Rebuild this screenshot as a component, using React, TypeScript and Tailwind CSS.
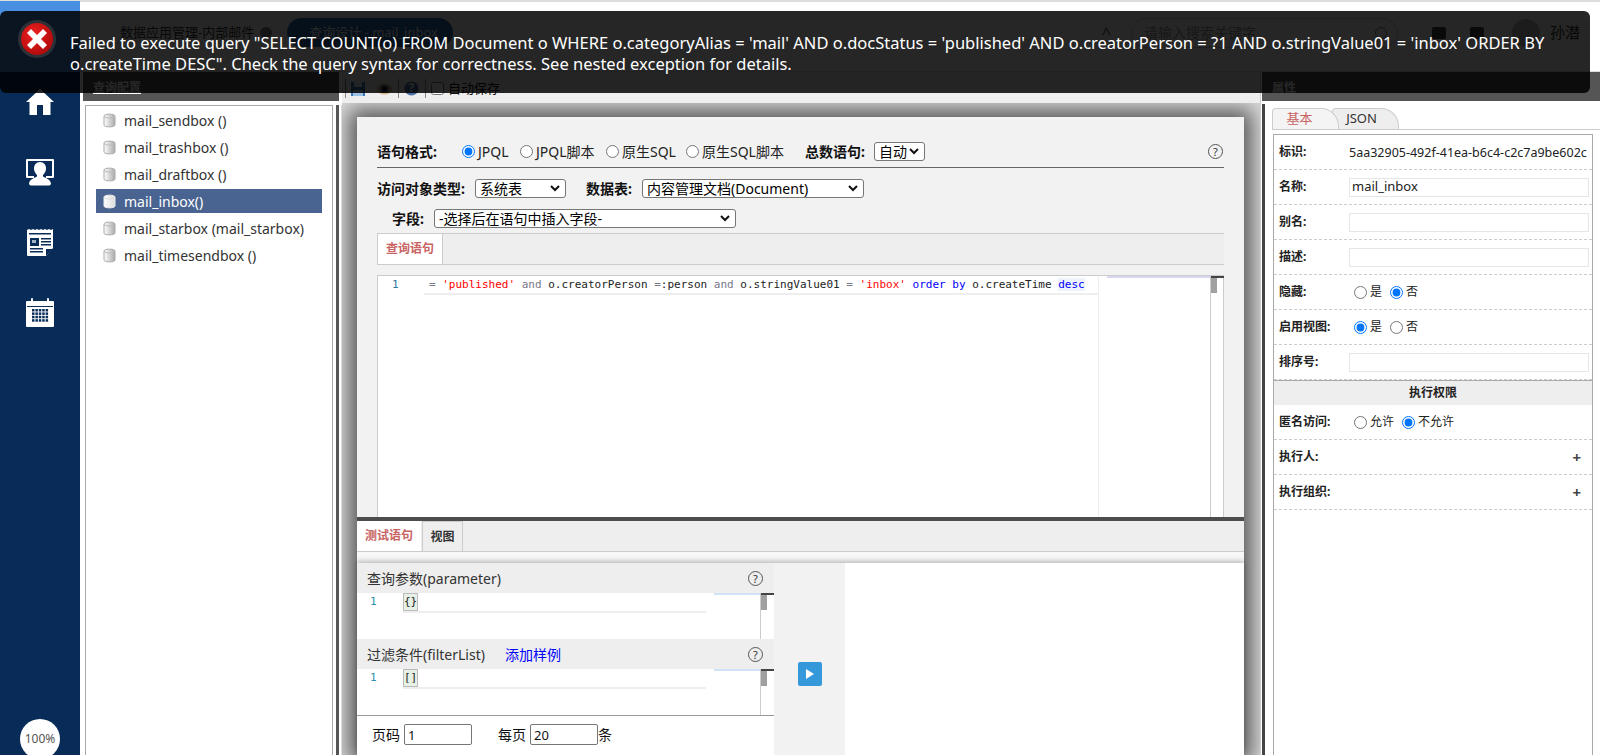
import type { ReactNode } from 'react'

const font = 'font-["Noto_Sans","Noto_Sans_CJK_SC",sans-serif]'

const queries = [
  'mail_sendbox ()',
  'mail_trashbox ()',
  'mail_draftbox ()',
  'mail_inbox()',
  'mail_starbox (mail_starbox)',
  'mail_timesendbox ()',
]

const HomeIcon = () => (
  <svg width="28" height="28" viewBox="0 0 28 28" fill="#fff">
    <path d="M14 1 L28 14 L24.5 14 L24.5 27 L17 27 L17 17 L11 17 L11 27 L3.5 27 L3.5 14 L0 14 Z" />
  </svg>
)

const PersonIcon = () => (
  <svg width="28" height="27" viewBox="0 0 28 27" fill="#fff">
    <path d="M1 0 H27 a1 1 0 0 1 1 1 V18 a1 1 0 0 1 -1 1 H20 V17 H26 V2 H2 V17 H8 V19 H1 a1 1 0 0 1 -1 -1 V1 a1 1 0 0 1 1 -1 Z" />
    <path d="M14 3 c4 0 6 3 6 6.500 c0 3 -1.500 5 -3 6.500 v1.500 c2 1.500 7 2 8 7 c0 1 -1 2 -2 2 H5 c-1 0 -2 -1 -2 -2 c1 -5 6 -5.500 8 -7 v-1.500 c-1.500 -1.500 -3 -3.500 -3 -6.500 c0 -3.500 2 -6.500 6 -6.500 Z" />
  </svg>
)

const NewsIcon = () => (
  <svg width="26" height="27" viewBox="0 0 26 27">
    <path fill="#fff" d="M0 1 L2 0 L4 1 L6 0 L8 1 L10 0 L12 1 L14 0 L16 1 L18 0 L20 1 L22 0 L24 1 L26 0 V19 L19 27 H1 a1 1 0 0 1 -1 -1 Z" />
    <g fill="#082c57">
      <rect x="2" y="4" width="22" height="1.500" />
      <rect x="3" y="9" width="9" height="8" />
      <rect x="14" y="9" width="10" height="1.500" />
      <rect x="14" y="12" width="10" height="1.500" />
      <rect x="14" y="15" width="10" height="1.500" />
      <rect x="3" y="19" width="13" height="1.500" />
      <rect x="3" y="22" width="13" height="1.500" />
      <path d="M19 27 V20 H26 Z" />
    </g>
    <rect x="5" y="11" width="4" height="3" fill="#9fb2c8" />
  </svg>
)

const CalendarIcon = () => (
  <svg width="28" height="29" viewBox="0 0 28 29">
    <path fill="#fff" d="M1 3 H5 V1 a1 1 0 0 1 2 0 V3 H21 V1 a1 1 0 0 1 2 0 V3 H27 a1 1 0 0 1 1 1 V28 a1 1 0 0 1 -1 1 H1 a1 1 0 0 1 -1 -1 V4 a1 1 0 0 1 1 -1 Z" />
    <rect x="1" y="8" width="26" height="1" fill="#082c57" />
    <g fill="#082c57">
      {[0, 1, 2, 3].map((r) =>
        [0, 1, 2, 3, 4].map((c) => (
          <rect key={`${r}-${c}`} x={6 + c * 3.4} y={11 + r * 3.4} width="2.500" height="2.500" />
        )),
      )}
    </g>
  </svg>
)

const DbIcon = ({ light }: { light?: boolean }) => (
  <svg width="13" height="15" viewBox="0 0 13 15">
    <defs>
      <linearGradient id={light ? 'dbl' : 'dbg'} x1="0" x2="1" y1="0" y2="0">
        <stop offset="0" stopColor="#fff" />
        <stop offset="1" stopColor={light ? '#ddd' : '#aaa'} />
      </linearGradient>
    </defs>
    <path
      d="M1 3 C1 0.500 12 0.500 12 3 V12 C12 14.500 1 14.500 1 12 Z"
      fill={`url(#${light ? 'dbl' : 'dbg'})`}
      stroke={light ? '#eee' : '#aaa'}
    />
    <path d="M1 3.500 C3 5.500 10 5.500 12 3.500" fill="none" stroke={light ? '#ddd' : '#bbb'} />
  </svg>
)

const Help = () => (
  <span className="flex h-[15px] w-[15px] items-center justify-center rounded-full border border-[#555] text-[11px] leading-none text-[#333]">
    ?
  </span>
)

const Radio = ({
  on,
  label,
  name,
  small,
  className = '',
}: {
  on?: boolean
  label: string
  name: string
  small?: boolean
  className?: string
}) => (
  <label className={`flex items-center gap-[3px] ${small ? 'text-[12px]' : 'text-[14px]'} text-[#222] ${className}`}>
    <input type="radio" name={name} defaultChecked={on} className="m-0 h-[13px] w-[13px]" />
    {label}
  </label>
)

const Select = ({ value, className }: { value: string; className: string }) => (
  <button className={`flex h-[19px] items-center justify-between rounded-[3px] border border-[#767676] bg-white pl-[4px] pr-[5px] text-[14px] leading-none text-black ${className}`}>
    <span className="whitespace-nowrap">{value}</span>
    <svg width="10" height="7" viewBox="0 0 10 7" fill="none" stroke="#111" strokeWidth="2">
      <path d="M1 1 L5 5 L9 1" />
    </svg>
  </button>
)

const PropRow = ({ label, children }: { label: string; children?: ReactNode }) => (
  <div className="flex h-[35px] items-center border-b border-dashed border-[#ccc] pl-[5px]">
    <div className="w-[70px] shrink-0 text-[12px] font-bold text-[#222]">{label}</div>
    <div className="min-w-0 flex-1 pr-[3px]">{children}</div>
  </div>
)

const PropInput = ({ value = '' }: { value?: string }) => (
  <input
    readOnly
    value={value}
    className="block h-[19px] w-full border border-[#e6e6e6] bg-white pl-[2px] text-[13px] text-[#222]"
  />
)

const ScrollBar = () => (
  <div className="relative w-[14px] shrink-0 border-l border-[#ccc]">
    <div className="h-[2px] bg-[#444]" />
    <div className="h-[15px] w-[6px] bg-[#a0a0a0]" />
  </div>
)

const SmallEditor = ({ code }: { code: string }) => (
  <div className="flex h-[46px] bg-white font-['DejaVu_Sans_Mono',monospace] text-[11px]">
    <div className="w-[46px] shrink-0 pl-[13px] pt-[1px] leading-[16px] text-[#2b91af]">1</div>
    <div className="h-[20px] w-[303px] shrink-0 border-b-2 border-[#eee]">
      <span className="block h-[18px] w-[15px] border border-[#bbb] bg-[#e6f0e4] text-center leading-[16px] text-[#222]">
        {code}
      </span>
    </div>
    <div className="ml-[8px] h-[2px] w-[46px] shrink-0 bg-[#cfe2f7]" />
    <ScrollBar />
  </div>
)

const Heading = ({ children }: { children: ReactNode }) => (
  <div className="flex h-[30px] items-center justify-between bg-[#eee] pl-[10px] pr-[11px] text-[14px] text-[#333]">
    {children}
  </div>
)

export default function App() {
  return (
    <div className={`relative flex h-screen w-full overflow-hidden bg-white text-[14px] ${font}`}>
      <nav className="flex w-[80px] shrink-0 flex-col items-center bg-[#082c57]">
        <div className="h-[72px] w-full border-t border-[#ddd] bg-[#4a90e2]" />
        <div className="mt-[16px]"><HomeIcon /></div>
        <div className="mt-[43px]"><PersonIcon /></div>
        <div className="mt-[43px]"><NewsIcon /></div>
        <div className="mt-[42px]"><CalendarIcon /></div>
        <div className="mt-auto mb-[-4px] flex h-[40px] w-[40px] items-center justify-center rounded-full bg-white text-[12px] text-[#555]">
          100%
        </div>
      </nav>

      <div className="flex min-w-0 flex-1 flex-col">
        <header className="flex h-[72px] shrink-0 items-center border-t-2 border-b border-[#ddd] bg-white pl-[40px] pr-[20px] pb-[8px]">
          <span className="text-[13px] text-[#333]">数据应用管理-内部邮件</span>
          <span className="ml-[6px] h-[12px] w-[12px] rounded-full bg-[#888]" />
          <span className="ml-[15px] flex h-[29px] w-[166px] items-center rounded-full bg-[#2b6cb0] pl-[22px] text-[13px] text-white">
            查询设计 - mail_inbox
          </span>
          <span className="ml-auto text-[16px] text-[#555]">^</span>
          <div className="ml-[20px] flex h-[30px] w-[267px] items-center justify-between rounded-full border border-[#ccc] pl-[12px] pr-[10px] text-[14px] text-[#999]">
            请输入搜索关键字
            <span className="h-[12px] w-[12px] rounded-full border border-[#888]" />
          </div>
          <span className="ml-[34px] h-[12px] w-[14px] rounded-[2px] bg-[#444]" />
          <span className="ml-[24px] h-[12px] w-[14px] rounded-[2px] bg-[#444]" />
          <span className="ml-[28px] h-[28px] w-[28px] rounded-full bg-[#bbb]" />
          <span className="ml-[10px] text-[15px] text-[#333]">孙潜</span>
        </header>

        <div className="flex min-h-0 flex-1">
          <aside className="flex w-[262px] shrink-0 flex-col bg-white pl-[3px]">
            <div className="h-[29px] w-[256px] shrink-0 bg-[#555] pl-[10px] pt-[7px] text-[12px] font-bold text-white underline">
              查询配置
            </div>
            <div className="flex min-h-0 flex-1 pt-[4px]">
              <div className="ml-[2px] w-[248px] border border-b-0 border-[#aaa] pl-[10px] pr-[10px] pt-[2px]">
                {queries.map((q, i) => (
                  <div
                    key={q}
                    className={`mb-[3px] flex h-[24px] items-center gap-[8px] pl-[7px] ${
                      i === 3 ? 'bg-[#4a6491] text-white' : 'text-[#333]'
                    }`}
                  >
                    <DbIcon light={i === 3} />
                    {q}
                  </div>
                ))}
              </div>
              <div className="ml-[3px] w-[3px] bg-[#555]" />
              <div className="w-[3px] border-r border-[#ddd] bg-white" />
            </div>
          </aside>

          <main className="flex w-[918px] shrink-0 flex-col">
            <div className="flex h-[31px] shrink-0 items-center bg-[#eee] pl-[3px] pt-[2px]">
              <span className="h-[19px] w-px bg-[#888]" />
              <svg className="ml-[5px]" width="14" height="14" viewBox="0 0 14 14">
                <rect width="14" height="14" fill="#3a78b5" />
                <rect x="3" y="0" width="8" height="5" fill="#dfe8f2" />
                <rect x="2" y="8" width="10" height="6" fill="#9cc0e4" />
              </svg>
              <svg className="ml-[12px]" width="15" height="12" viewBox="0 0 15 12">
                <ellipse cx="7.500" cy="6" rx="7.500" ry="5.500" fill="#d9b38c" />
                <circle cx="7.500" cy="6" r="4" fill="#445a7a" />
                <circle cx="7.500" cy="6" r="2" fill="#111" />
              </svg>
              <span className="ml-[6px] h-[19px] w-px bg-[#888]" />
              <svg className="ml-[5px]" width="15" height="15" viewBox="0 0 17 17">
                <circle cx="8.500" cy="8.500" r="8" fill="#4a6fa5" />
                <text x="8.500" y="13" textAnchor="middle" fontSize="13" fontWeight="700" fill="#fff">?</text>
              </svg>
              <span className="ml-[6px] h-[19px] w-px bg-[#888]" />
              <label className="ml-[5px] flex items-center gap-[4px] text-[13px] text-[#111]">
                <input type="checkbox" className="m-0 h-[13px] w-[13px]" />
                自动保存
              </label>
            </div>

            <div className="min-h-0 flex-1 overflow-hidden bg-[#dcdcdc] pl-[15px] pr-[16px] pt-[14px]">
              <div className="flex h-full flex-col bg-[#f2f2f2] shadow-[0_0_20px_8px_rgba(0,0,0,0.6)]">
                <div className="flex h-[400px] shrink-0 flex-col px-[20px] pt-[19px]">
                  <div className="flex h-[32px] shrink-0 items-center border-b border-[#666]">
                    <span className="w-[85px] shrink-0 text-[14px] font-bold text-[#111]">语句格式:</span>
                    <Radio on name="fmt" label="JPQL" className="w-[58px]" />
                    <Radio name="fmt" label="JPQL脚本" className="w-[86px]" />
                    <Radio name="fmt" label="原生SQL" className="w-[80px]" />
                    <Radio name="fmt" label="原生SQL脚本" className="w-[119px]" />
                    <span className="w-[69px] shrink-0 text-[14px] font-bold text-[#111]">总数语句:</span>
                    <Select value="自动" className="w-[51px]" />
                    <span className="ml-auto mr-[1px]"><Help /></span>
                  </div>
                  <div className="mt-[11px] flex h-[19px] shrink-0 items-center">
                    <span className="w-[98px] shrink-0 text-[14px] font-bold text-[#111]">访问对象类型:</span>
                    <Select value="系统表" className="w-[91px]" />
                    <span className="ml-[20px] w-[56px] shrink-0 text-[14px] font-bold text-[#111]">数据表:</span>
                    <Select value="内容管理文档(Document)" className="w-[222px]" />
                  </div>
                  <div className="mt-[11px] flex h-[19px] shrink-0 items-center pl-[15px]">
                    <span className="w-[42px] shrink-0 text-[14px] font-bold text-[#111]">字段:</span>
                    <Select value="-选择后在语句中插入字段-" className="w-[302px]" />
                  </div>
                  <div className="mt-[5px] flex h-[32px] shrink-0 border-y border-[#ccc] bg-[#eee]">
                    <div className="flex w-[66px] items-center justify-center border-x border-[#ccc] bg-white text-[12px] font-bold text-[#c86464]">
                      查询语句
                    </div>
                  </div>
                  <div className="mt-[10px] flex min-h-0 flex-1 border-x border-t border-[#ccc] bg-white font-['DejaVu_Sans_Mono',monospace] text-[11px]">
                    <div className="w-[46px] shrink-0 pl-[14px] leading-[17px] text-[#2b7a9b]">1</div>
                    <div className="h-[19px] w-[674px] shrink-0 whitespace-pre border-b-2 border-[#eee] pl-[5px] leading-[17px] text-[#222]">
                      <span className="text-[#778]">= </span>
                      <span className="text-[#f00]">'published'</span>
                      <span className="text-[#778]"> and </span>o.creatorPerson
                      <span className="text-[#778]"> =</span>:person
                      <span className="text-[#778]"> and </span>o.stringValue01
                      <span className="text-[#778]"> = </span>
                      <span className="text-[#f00]">'inbox'</span>{' '}
                      <span className="text-[#00f]">order</span> <span className="text-[#00f]">by</span> o.createTime{' '}
                      <span className="bg-[#eef2fb] text-[#00f]">desc</span>
                    </div>
                    <div className="w-[112px] shrink-0 border-l border-[#eee] pl-[8px]">
                      <div className="h-[2px] w-[103px] bg-[#d5d8f0]" />
                    </div>
                    <ScrollBar />
                  </div>
                </div>

                <div className="h-[4px] shrink-0 bg-[#4d4d4d]" />
                <div className="flex h-[31px] shrink-0 border-b border-[#ccc] bg-[#eee]">
                  <div className="flex w-[64px] items-center justify-center bg-white text-[12px] font-bold text-[#c86464]">
                    测试语句
                  </div>
                  <div className="ml-[1px] flex w-[41px] items-center justify-center border-x border-t border-[#ccc] text-[12px] font-bold text-[#333]">
                    视图
                  </div>
                </div>
                <div className="h-[11px] shrink-0 bg-[#f8f8f8]" />

                <div className="flex min-h-0 flex-1 bg-white shadow-[0_-2px_5px_rgba(0,0,0,0.25)]">
                  <div className="flex w-[417px] shrink-0 flex-col bg-white">
                    <Heading>
                      查询参数(parameter)
                      <Help />
                    </Heading>
                    <SmallEditor code="{}" />
                    <Heading>
                      <span>
                        过滤条件(filterList)
                        <span className="ml-[20px] text-[#00f]">添加样例</span>
                      </span>
                      <Help />
                    </Heading>
                    <SmallEditor code="[]" />
                    <div className="flex flex-1 items-start border-t border-[#999] pl-[15px] pt-[8px] text-[14px] text-[#111]">
                      <span className="leading-[21px]">页码</span>
                      <input
                        readOnly
                        value="1"
                        className="ml-[4px] h-[21px] w-[68px] rounded-[2px] border border-[#767676] bg-white pl-[3px] text-[13px]"
                      />
                      <span className="ml-[26px] leading-[21px]">每页</span>
                      <input
                        readOnly
                        value="20"
                        className="ml-[4px] h-[21px] w-[68px] rounded-[2px] border border-[#767676] bg-white pl-[3px] text-[13px]"
                      />
                      <span className="leading-[21px]">条</span>
                    </div>
                  </div>
                  <div className="flex w-[71px] shrink-0 items-start justify-center bg-[#f2f2f2] pt-[99px]">
                    <button className="flex h-[24px] w-[24px] items-center justify-center rounded-[2px] bg-[#3498db]">
                      <svg width="8" height="10" viewBox="0 0 8 10" fill="#fff">
                        <path d="M0 0 L8 5 L0 10 Z" />
                      </svg>
                    </button>
                  </div>
                </div>
              </div>
            </div>
          </main>

          <aside className="flex min-w-0 flex-1 flex-col border-l border-[#ccc] bg-white pl-[1px]">
            <div className="h-[29px] w-[338px] shrink-0 bg-[#555] pl-[10px] pt-[7px] text-[12px] font-bold text-white">
              属性
            </div>
            <div className="mt-[3px] flex min-h-0 flex-1">
              <div className="w-[3px] shrink-0 bg-[#444]" />
              <div className="flex min-w-0 flex-1 flex-col pl-[7px]">
                <div className="flex h-[26px] shrink-0 items-end border-b border-[#ccc]">
                  <div className="z-10 flex h-[21px] w-[67px] items-center justify-center rounded-t-[4px] rounded-tr-[18px] border border-b-0 border-[#ccc] bg-[#f4f4f4] pr-[12px] text-[13px] text-[#c86464]">
                    基本
                  </div>
                  <div className="ml-[-7px] flex h-[21px] w-[67px] items-center justify-center rounded-t-[4px] rounded-tr-[18px] border border-b-0 border-[#ccc] bg-[#eee] pr-[8px] text-[13px] text-[#333]">
                    JSON
                  </div>
                </div>
                <div className="ml-[1px] mt-[4px] flex min-h-0 w-[320px] flex-1 flex-col border-x border-t border-[#aaa]">
                  <PropRow label="标识:">
                    <span className="whitespace-nowrap text-[12.5px] text-[#222]">5aa32905-492f-41ea-b6c4-c2c7a9be602c</span>
                  </PropRow>
                  <PropRow label="名称:"><PropInput value="mail_inbox" /></PropRow>
                  <PropRow label="别名:"><PropInput /></PropRow>
                  <PropRow label="描述:"><PropInput /></PropRow>
                  <PropRow label="隐藏:">
                    <div className="flex gap-[8px] pl-[5px]">
                      <Radio small name="hide" label="是" />
                      <Radio small on name="hide" label="否" />
                    </div>
                  </PropRow>
                  <PropRow label="启用视图:">
                    <div className="flex gap-[8px] pl-[5px]">
                      <Radio small on name="view" label="是" />
                      <Radio small name="view" label="否" />
                    </div>
                  </PropRow>
                  <PropRow label="排序号:"><PropInput /></PropRow>
                  <div className="flex h-[25px] shrink-0 items-center justify-center border-t border-[#aaa] bg-[#eee] text-[12px] font-bold text-[#222]">
                    执行权限
                  </div>
                  <PropRow label="匿名访问:">
                    <div className="flex gap-[8px] pl-[5px]">
                      <Radio small name="anon" label="允许" />
                      <Radio small on name="anon" label="不允许" />
                    </div>
                  </PropRow>
                  <PropRow label="执行人:">
                    <div className="pr-[8px] text-right text-[15px] font-bold leading-none text-[#444]">+</div>
                  </PropRow>
                  <PropRow label="执行组织:">
                    <div className="pr-[8px] text-right text-[15px] font-bold leading-none text-[#444]">+</div>
                  </PropRow>
                </div>
              </div>
            </div>
          </aside>
        </div>
      </div>

      <div className="absolute left-0 top-[11px] flex h-[82px] w-[1590px] rounded-[6px] bg-black/85 text-[16.5px] leading-[21px] text-white">
        <svg className="ml-[18px] mt-[9px] shrink-0" width="38" height="38" viewBox="0 0 38 38">
          <defs>
            <radialGradient id="err" cx="0.4" cy="0.35" r="0.75">
              <stop offset="0" stopColor="#f02020" />
              <stop offset="1" stopColor="#a80808" />
            </radialGradient>
          </defs>
          <circle cx="19" cy="19" r="19" fill="#555" fillOpacity="0.45" />
          <circle cx="19" cy="19" r="16" fill="url(#err)" />
          <path d="M9 13 L13 9 L19 15 L25 9 L29 13 L23 19 L29 25 L25 29 L19 23 L13 29 L9 25 L15 19 Z" fill="#fff" />
        </svg>
        <p className="ml-[14px] mt-[21px] w-[1510px]">
          Failed to execute query "SELECT COUNT(o) FROM Document o WHERE o.categoryAlias = 'mail' AND o.docStatus = 'published' AND o.creatorPerson = ?1 AND o.stringValue01 = 'inbox' ORDER BY o.createTime DESC". Check the query syntax for correctness. See nested exception for details.
        </p>
      </div>
    </div>
  )
}
